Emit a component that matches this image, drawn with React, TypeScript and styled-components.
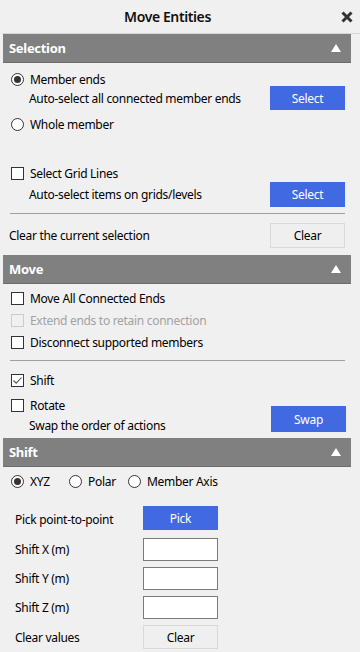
import React from "react";
import styled, { createGlobalStyle } from "styled-components";

const GlobalStyle = createGlobalStyle`
  html, body {
    margin: 0;
    padding: 0;
    background: #f0f0f0;
  }
  body {
    font-family: "Noto Sans", "Open Sans", sans-serif;
    font-size: 12px;
    letter-spacing: -0.3px;
    color: #000;
  }
`;

const Window = styled.div`
  width: 360px;
  height: 652px;
  overflow: hidden;
  background: #f0f0f0;
`;

const TitleBar = styled.header`
  display: flex;
  align-items: center;
  height: 33px;
  margin-left: 2px;
  border-bottom: 1px solid #d6d6d6;
`;

const Title = styled.h1`
  flex: 1;
  margin: 0;
  text-align: center;
  font-size: 14px;
  font-weight: 600;
  letter-spacing: -0.4px;
  color: #111;
`;

const CloseButton = styled.button`
  width: 27px;
  height: 33px;
  padding: 0;
  border: 0;
  background: transparent;
  display: flex;
  align-items: center;
  justify-content: center;
`;

const Panel = styled.div`
  width: 348px;
  margin-left: 3px;
`;

const SectionHeader = styled.div`
  display: flex;
  align-items: center;
  justify-content: space-between;
  height: 28px;
  padding: 0 10px 0 6px;
  background: #808080;
  border-bottom: 1px solid #6b6b6b;
  color: #fff;
  font-size: 13px;
  font-weight: 700;
`;

const SectionBody = styled.div<{ $top: number; $bottom: number }>`
  display: flex;
  flex-direction: column;
  padding: ${(p) => p.$top}px 6px ${(p) => p.$bottom}px 8px;
`;

const OptionRow = styled.label<{ $mt?: number; $disabled?: boolean }>`
  display: flex;
  align-items: center;
  gap: 6px;
  height: 22px;
  margin-top: ${(p) => p.$mt ?? 0}px;
  color: ${(p) => (p.$disabled ? "#a2a2a2" : "#000")};
`;

const DescRow = styled.div<{ $mt?: number }>`
  display: flex;
  align-items: center;
  justify-content: space-between;
  padding-left: 18px;
  margin-top: ${(p) => p.$mt ?? 0}px;
`;

const ClearRow = styled.div<{ $mt?: number }>`
  display: flex;
  align-items: center;
  justify-content: space-between;
  margin-left: -2px;
  margin-top: ${(p) => p.$mt ?? 0}px;
`;

const Separator = styled.hr<{ $mt?: number }>`
  width: 335px;
  height: 1px;
  margin: ${(p) => p.$mt ?? 0}px 0 0 -1px;
  border: 0;
  background: #a0a0a0;
`;

const Button = styled.button<{ $primary?: boolean; $h?: number }>`
  width: 75px;
  height: ${(p) => p.$h ?? 24}px;
  padding: 0;
  font-family: inherit;
  font-size: 12px;
  letter-spacing: -0.3px;
  color: ${(p) => (p.$primary ? "#fff" : "#000")};
  background: ${(p) => (p.$primary ? "#4169e1" : "#efefef")};
  border: 1px solid ${(p) => (p.$primary ? "#4169e1" : "#d9d9d9")};
`;

const RadioMark = styled.span<{ $checked?: boolean }>`
  position: relative;
  width: 13px;
  height: 13px;
  box-sizing: border-box;
  border: 1px solid #333;
  border-radius: 50%;
  background: #fff;
  flex: none;
  &::after {
    content: "";
    display: ${(p) => (p.$checked ? "block" : "none")};
    position: absolute;
    left: 2px;
    top: 2px;
    width: 7px;
    height: 7px;
    border-radius: 50%;
    background: #333;
  }
`;

const CheckMark = styled.span<{ $disabled?: boolean }>`
  display: flex;
  align-items: center;
  justify-content: center;
  width: 13px;
  height: 13px;
  box-sizing: border-box;
  border: 1px solid ${(p) => (p.$disabled ? "#cccccc" : "#333")};
  background: ${(p) => (p.$disabled ? "#f0f0f0" : "#fff")};
  flex: none;
`;

const RotateBlock = styled.div`
  display: grid;
  grid-template-columns: 1fr auto;
  margin-top: 3px;
`;

const DescText = styled.div`
  height: 19px;
  line-height: 19px;
  padding-left: 18px;
`;

const SwapSlot = styled.div`
  align-self: end;
  margin: 0 -1px 3px 0;
`;

const RadioGroup = styled.div`
  display: flex;
  align-items: center;
`;

const RadioItem = styled(OptionRow)<{ $w?: number }>`
  width: ${(p) => (p.$w ? `${p.$w}px` : "auto")};
`;

const FormGrid = styled.div`
  display: grid;
  grid-template-columns: 128px 75px;
  grid-template-rows: 26px 23px 23px 23px 24px;
  row-gap: 6px;
  align-items: center;
  margin: 14px 0 0 4px;
  & > :nth-child(2) {
    align-self: start;
  }
`;

const NumberInput = styled.input`
  width: 75px;
  height: 23px;
  box-sizing: border-box;
  border: 1px solid #7a7a7a;
  background: #fff;
  font-family: inherit;
  font-size: 12px;
`;

const Radio = ({ label, checked, w }: { label: string; checked?: boolean; w?: number }) => (
  <RadioItem $w={w}>
    <RadioMark $checked={checked} />
    <span>{label}</span>
  </RadioItem>
);

const Check = ({
  label,
  checked,
  disabled,
  mt,
}: {
  label: string;
  checked?: boolean;
  disabled?: boolean;
  mt?: number;
}) => (
  <OptionRow $mt={mt} $disabled={disabled}>
    <CheckMark $disabled={disabled}>
      {checked && (
        <svg width="11" height="11" viewBox="0 0 11 11">
          <polyline points="1.5,5.5 4.2,8.2 9.5,2.5" fill="none" stroke="#555" strokeWidth="1.1" />
        </svg>
      )}
    </CheckMark>
    <span>{label}</span>
  </OptionRow>
);

const Collapse = () => (
  <svg width="10" height="8" viewBox="0 0 10 8">
    <polygon points="5,0 10,8 0,8" fill="#fff" />
  </svg>
);

const Section: React.FC<{ title: string; children?: React.ReactNode }> = ({ title, children }) => (
  <section>
    <SectionHeader>
      <span>{title}</span>
      <Collapse />
    </SectionHeader>
    {children}
  </section>
);

export default function App() {
  return (
    <Window>
      <GlobalStyle />
      <TitleBar>
        <Title>Move Entities</Title>
        <CloseButton aria-label="Close">
          <svg width="12" height="12" viewBox="0 0 12 12">
            <path d="M1.5 1.5 L10.5 10.5 M10.5 1.5 L1.5 10.5" stroke="#333" strokeWidth="3" />
          </svg>
        </CloseButton>
      </TitleBar>
      <Panel>
        <Section title="Selection">
          <SectionBody $top={5} $bottom={7}>
            <OptionRow>
              <RadioMark $checked />
              <span>Member ends</span>
            </OptionRow>
            <DescRow $mt={-4}>
              <span>Auto-select all connected member ends</span>
              <Button $primary>Select</Button>
            </DescRow>
            <OptionRow $mt={3}>
              <RadioMark />
              <span>Whole member</span>
            </OptionRow>
            <Check label="Select Grid Lines" mt={27} />
            <DescRow $mt={-2}>
              <span>Auto-select items on grids/levels</span>
              <Button $primary $h={25}>
                Select
              </Button>
            </DescRow>
            <Separator $mt={6} />
            <ClearRow $mt={9}>
              <span>Clear the current selection</span>
              <Button $h={25}>Clear</Button>
            </ClearRow>
          </SectionBody>
        </Section>
        <Section title="Move">
          <SectionBody $top={3} $bottom={3}>
            <Check label="Move All Connected Ends" />
            <Check label="Extend ends to retain connection" disabled />
            <Check label="Disconnect supported members" />
            <Separator $mt={7} />
            <Check label="Shift" checked mt={8} />
            <RotateBlock>
              <div>
                <Check label="Rotate" />
                <DescText>Swap the order of actions</DescText>
              </div>
              <SwapSlot>
                <Button $primary $h={26}>
                  Swap
                </Button>
              </SwapSlot>
            </RotateBlock>
          </SectionBody>
        </Section>
        <Section title="Shift">
          <SectionBody $top={3} $bottom={0}>
            <RadioGroup>
              <Radio label="XYZ" checked w={58} />
              <Radio label="Polar" w={59} />
              <Radio label="Member Axis" />
            </RadioGroup>
            <FormGrid>
              <span>Pick point-to-point</span>
              <Button $primary>Pick</Button>
              <span>Shift X (m)</span>
              <NumberInput />
              <span>Shift Y (m)</span>
              <NumberInput />
              <span>Shift Z (m)</span>
              <NumberInput />
              <span>Clear values</span>
              <Button>Clear</Button>
            </FormGrid>
          </SectionBody>
        </Section>
      </Panel>
    </Window>
  );
}
